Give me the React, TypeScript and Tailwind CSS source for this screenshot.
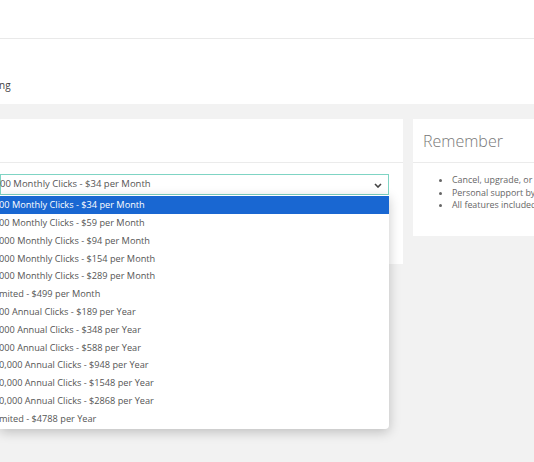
import React from "react";

const options = [
  "00 Monthly Clicks - $34 per Month",
  "00 Monthly Clicks - $59 per Month",
  "000 Monthly Clicks - $94 per Month",
  "000 Monthly Clicks - $154 per Month",
  "000 Monthly Clicks - $289 per Month",
  "mited - $499 per Month",
  "00 Annual Clicks - $189 per Year",
  "000 Annual Clicks - $348 per Year",
  "000 Annual Clicks - $588 per Year",
  "0,000 Annual Clicks - $948 per Year",
  "0,000 Annual Clicks - $1548 per Year",
  "0,000 Annual Clicks - $2868 per Year",
  "mited - $4788 per Year",
];

export default function App() {
  return (
    <div className="w-[534px] h-[462px] overflow-hidden bg-[#f2f2f2] font-['Open_Sans',sans-serif] text-[#555]">
      <div className="h-[39px] bg-white border-b border-[#e9e9e9]" />
      <div className="h-[65px] bg-white pt-[40px]">
        <div className="text-[10px] leading-[12px] text-[#444] -ml-[1px]">ng</div>
      </div>
      <div className="flex gap-[10px] pt-[15px]">
        <div className="w-[403px] h-[145px] bg-white shrink-0">
          <div className="h-[44px] border-b border-[#ebebeb]" />
          <div className="pt-[11px] pr-[14px] relative">
            <div className="h-[21px] border border-[#7fd4c4] bg-white flex items-center justify-between pr-[6px]">
              <span className="text-[9.5px] text-[#555] whitespace-nowrap -ml-[1px]">00 Monthly Clicks - $34 per Month</span>
              <svg width="8" height="5" viewBox="0 0 8 5" className="mt-[1px]">
                <path d="M1 1 L4 4 L7 1" fill="none" stroke="#444" strokeWidth="1.6" />
              </svg>
            </div>
            <div className="absolute left-0 right-[14px] top-[32px] bg-white rounded-br-[4px] shadow-[0_3px_12px_rgba(0,0,0,0.22)] pt-[1px] pb-[1px]">
              {options.map((o, i) => (
                <div
                  key={i}
                  className={
                    "h-[17.83px] flex items-center text-[9.2px] whitespace-nowrap -ml-[1px] " +
                    (i === 0 ? "bg-[#1967d2] text-white" : "text-[#555]")
                  }
                >
                  {o}
                </div>
              ))}
            </div>
          </div>
        </div>
        <div className="flex-1 h-[117px] bg-white overflow-hidden">
          <div className="h-[44px] border-b border-[#ebebeb] flex items-center pl-[10px] pt-[1px]">
            <span className="text-[16px] font-light text-[#777] whitespace-nowrap">Remember</span>
          </div>
          <ul className="list-disc pl-[39px] pt-[11px] text-[8.9px] leading-[12.5px] text-[#666] whitespace-nowrap">
            <li>Cancel, upgrade, or change your plan anytime</li>
            <li>Personal support by email</li>
            <li>All features included</li>
          </ul>
        </div>
      </div>
    </div>
  );
}
